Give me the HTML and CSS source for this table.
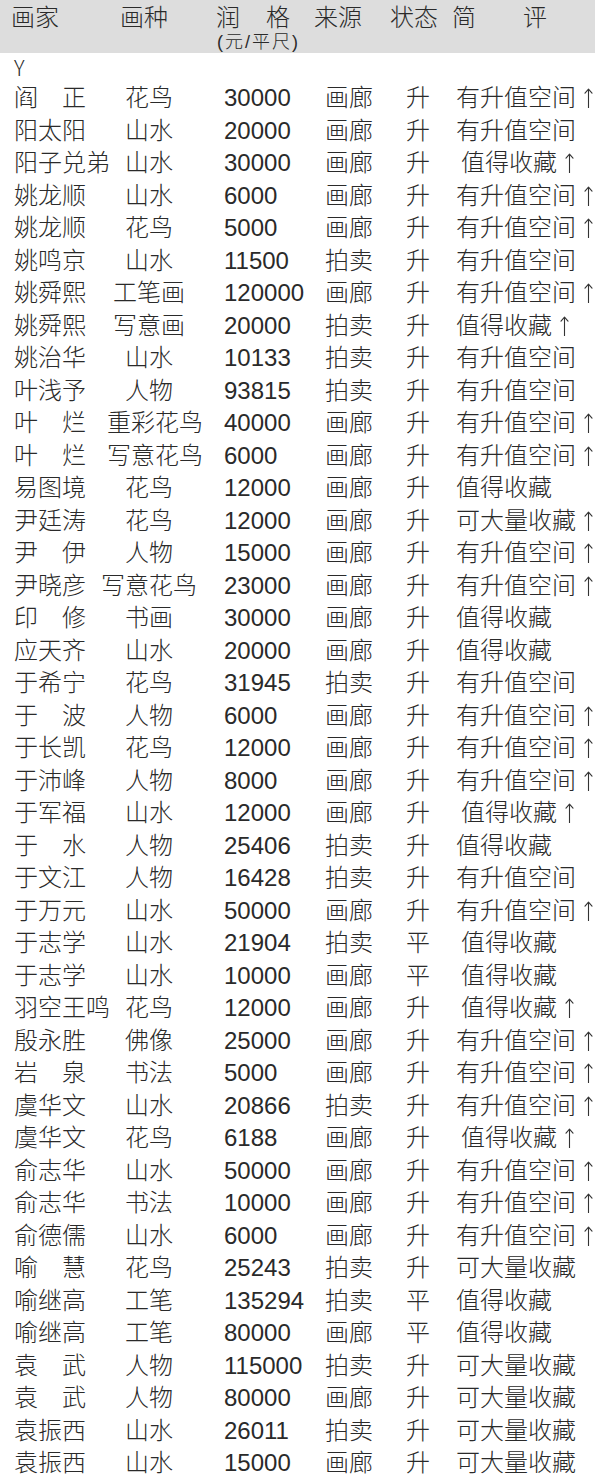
FILE: index.html
```html
<!DOCTYPE html>
<html lang="zh">
<head>
<meta charset="utf-8">
<title>画家润格</title>
<link rel="stylesheet" href="styles.css">
</head>
<body>
<svg width="0" height="0" class="defs" aria-hidden="true">
  <defs>
    <symbol id="arrow-up" viewBox="0 0 9 20">
      <path d="M4.5 1.2 V20 M1 5.2 L4.5 1.2 L8 5.2" fill="none" stroke="#333" stroke-width="1.1" stroke-linecap="round" stroke-linejoin="round"/>
    </symbol>
  </defs>
</svg>
<div class="sheet">
  <div class="head">
    <div class="h-name">画家</div>
    <div class="h-cat">画种</div>
    <div class="h-price">
      <div class="h-price-main"><span>润</span><span>格</span></div>
      <div class="h-unit">(元/平尺)</div>
    </div>
    <div class="h-src">来源</div>
    <div class="h-state">状态</div>
    <div class="h-com"><span>简</span><span class="h-ping">评</span></div>
  </div>
  <div class="letter">Y</div>
  <div class="rows">
    <div class="row"><div class="c-name">阎　正</div><div class="c-cat">花鸟</div><div class="c-price">30000</div><div class="c-src">画廊</div><div class="c-state">升</div><div class="c-com">有升值空间<svg class="up" aria-label="↑"><use href="#arrow-up"/></svg></div></div>
    <div class="row"><div class="c-name">阳太阳</div><div class="c-cat">山水</div><div class="c-price">20000</div><div class="c-src">画廊</div><div class="c-state">升</div><div class="c-com">有升值空间</div></div>
    <div class="row"><div class="c-name">阳子兑弟</div><div class="c-cat">山水</div><div class="c-price">30000</div><div class="c-src">画廊</div><div class="c-state">升</div><div class="c-com shift">值得收藏<svg class="up" aria-label="↑"><use href="#arrow-up"/></svg></div></div>
    <div class="row"><div class="c-name">姚龙顺</div><div class="c-cat">山水</div><div class="c-price">6000</div><div class="c-src">画廊</div><div class="c-state">升</div><div class="c-com">有升值空间<svg class="up" aria-label="↑"><use href="#arrow-up"/></svg></div></div>
    <div class="row"><div class="c-name">姚龙顺</div><div class="c-cat">花鸟</div><div class="c-price">5000</div><div class="c-src">画廊</div><div class="c-state">升</div><div class="c-com">有升值空间<svg class="up" aria-label="↑"><use href="#arrow-up"/></svg></div></div>
    <div class="row"><div class="c-name">姚鸣京</div><div class="c-cat">山水</div><div class="c-price">11500</div><div class="c-src">拍卖</div><div class="c-state">升</div><div class="c-com">有升值空间</div></div>
    <div class="row"><div class="c-name">姚舜熙</div><div class="c-cat">工笔画</div><div class="c-price">120000</div><div class="c-src">画廊</div><div class="c-state">升</div><div class="c-com">有升值空间<svg class="up" aria-label="↑"><use href="#arrow-up"/></svg></div></div>
    <div class="row"><div class="c-name">姚舜熙</div><div class="c-cat">写意画</div><div class="c-price">20000</div><div class="c-src">拍卖</div><div class="c-state">升</div><div class="c-com">值得收藏<svg class="up" aria-label="↑"><use href="#arrow-up"/></svg></div></div>
    <div class="row"><div class="c-name">姚治华</div><div class="c-cat">山水</div><div class="c-price">10133</div><div class="c-src">拍卖</div><div class="c-state">升</div><div class="c-com">有升值空间</div></div>
    <div class="row"><div class="c-name">叶浅予</div><div class="c-cat">人物</div><div class="c-price">93815</div><div class="c-src">拍卖</div><div class="c-state">升</div><div class="c-com">有升值空间</div></div>
    <div class="row"><div class="c-name">叶　烂</div><div class="c-cat wide">重彩花鸟</div><div class="c-price">40000</div><div class="c-src">画廊</div><div class="c-state">升</div><div class="c-com">有升值空间<svg class="up" aria-label="↑"><use href="#arrow-up"/></svg></div></div>
    <div class="row"><div class="c-name">叶　烂</div><div class="c-cat wide">写意花鸟</div><div class="c-price">6000</div><div class="c-src">画廊</div><div class="c-state">升</div><div class="c-com">有升值空间<svg class="up" aria-label="↑"><use href="#arrow-up"/></svg></div></div>
    <div class="row"><div class="c-name">易图境</div><div class="c-cat">花鸟</div><div class="c-price">12000</div><div class="c-src">画廊</div><div class="c-state">升</div><div class="c-com">值得收藏</div></div>
    <div class="row"><div class="c-name">尹廷涛</div><div class="c-cat">花鸟</div><div class="c-price">12000</div><div class="c-src">画廊</div><div class="c-state">升</div><div class="c-com">可大量收藏<svg class="up" aria-label="↑"><use href="#arrow-up"/></svg></div></div>
    <div class="row"><div class="c-name">尹　伊</div><div class="c-cat">人物</div><div class="c-price">15000</div><div class="c-src">画廊</div><div class="c-state">升</div><div class="c-com">有升值空间<svg class="up" aria-label="↑"><use href="#arrow-up"/></svg></div></div>
    <div class="row"><div class="c-name">尹晓彦</div><div class="c-cat">写意花鸟</div><div class="c-price">23000</div><div class="c-src">画廊</div><div class="c-state">升</div><div class="c-com">有升值空间<svg class="up" aria-label="↑"><use href="#arrow-up"/></svg></div></div>
    <div class="row"><div class="c-name">印　修</div><div class="c-cat">书画</div><div class="c-price">30000</div><div class="c-src">画廊</div><div class="c-state">升</div><div class="c-com">值得收藏</div></div>
    <div class="row"><div class="c-name">应天齐</div><div class="c-cat">山水</div><div class="c-price">20000</div><div class="c-src">画廊</div><div class="c-state">升</div><div class="c-com">值得收藏</div></div>
    <div class="row"><div class="c-name">于希宁</div><div class="c-cat">花鸟</div><div class="c-price">31945</div><div class="c-src">拍卖</div><div class="c-state">升</div><div class="c-com">有升值空间</div></div>
    <div class="row"><div class="c-name">于　波</div><div class="c-cat">人物</div><div class="c-price">6000</div><div class="c-src">画廊</div><div class="c-state">升</div><div class="c-com">有升值空间<svg class="up" aria-label="↑"><use href="#arrow-up"/></svg></div></div>
    <div class="row"><div class="c-name">于长凯</div><div class="c-cat">花鸟</div><div class="c-price">12000</div><div class="c-src">画廊</div><div class="c-state">升</div><div class="c-com">有升值空间<svg class="up" aria-label="↑"><use href="#arrow-up"/></svg></div></div>
    <div class="row"><div class="c-name">于沛峰</div><div class="c-cat">人物</div><div class="c-price">8000</div><div class="c-src">画廊</div><div class="c-state">升</div><div class="c-com">有升值空间<svg class="up" aria-label="↑"><use href="#arrow-up"/></svg></div></div>
    <div class="row"><div class="c-name">于军福</div><div class="c-cat">山水</div><div class="c-price">12000</div><div class="c-src">画廊</div><div class="c-state">升</div><div class="c-com shift">值得收藏<svg class="up" aria-label="↑"><use href="#arrow-up"/></svg></div></div>
    <div class="row"><div class="c-name">于　水</div><div class="c-cat">人物</div><div class="c-price">25406</div><div class="c-src">拍卖</div><div class="c-state">升</div><div class="c-com">值得收藏</div></div>
    <div class="row"><div class="c-name">于文江</div><div class="c-cat">人物</div><div class="c-price">16428</div><div class="c-src">拍卖</div><div class="c-state">升</div><div class="c-com">有升值空间</div></div>
    <div class="row"><div class="c-name">于万元</div><div class="c-cat">山水</div><div class="c-price">50000</div><div class="c-src">画廊</div><div class="c-state">升</div><div class="c-com">有升值空间<svg class="up" aria-label="↑"><use href="#arrow-up"/></svg></div></div>
    <div class="row"><div class="c-name">于志学</div><div class="c-cat">山水</div><div class="c-price">21904</div><div class="c-src">拍卖</div><div class="c-state">平</div><div class="c-com shift">值得收藏</div></div>
    <div class="row"><div class="c-name">于志学</div><div class="c-cat">山水</div><div class="c-price">10000</div><div class="c-src">画廊</div><div class="c-state">平</div><div class="c-com shift">值得收藏</div></div>
    <div class="row"><div class="c-name">羽空王鸣</div><div class="c-cat">花鸟</div><div class="c-price">12000</div><div class="c-src">画廊</div><div class="c-state">升</div><div class="c-com shift">值得收藏<svg class="up" aria-label="↑"><use href="#arrow-up"/></svg></div></div>
    <div class="row"><div class="c-name">殷永胜</div><div class="c-cat">佛像</div><div class="c-price">25000</div><div class="c-src">画廊</div><div class="c-state">升</div><div class="c-com">有升值空间<svg class="up" aria-label="↑"><use href="#arrow-up"/></svg></div></div>
    <div class="row"><div class="c-name">岩　泉</div><div class="c-cat">书法</div><div class="c-price">5000</div><div class="c-src">画廊</div><div class="c-state">升</div><div class="c-com">有升值空间<svg class="up" aria-label="↑"><use href="#arrow-up"/></svg></div></div>
    <div class="row"><div class="c-name">虞华文</div><div class="c-cat">山水</div><div class="c-price">20866</div><div class="c-src">拍卖</div><div class="c-state">升</div><div class="c-com">有升值空间<svg class="up" aria-label="↑"><use href="#arrow-up"/></svg></div></div>
    <div class="row"><div class="c-name">虞华文</div><div class="c-cat">花鸟</div><div class="c-price">6188</div><div class="c-src">画廊</div><div class="c-state">升</div><div class="c-com shift">值得收藏<svg class="up" aria-label="↑"><use href="#arrow-up"/></svg></div></div>
    <div class="row"><div class="c-name">俞志华</div><div class="c-cat">山水</div><div class="c-price">50000</div><div class="c-src">画廊</div><div class="c-state">升</div><div class="c-com">有升值空间<svg class="up" aria-label="↑"><use href="#arrow-up"/></svg></div></div>
    <div class="row"><div class="c-name">俞志华</div><div class="c-cat">书法</div><div class="c-price">10000</div><div class="c-src">画廊</div><div class="c-state">升</div><div class="c-com">有升值空间<svg class="up" aria-label="↑"><use href="#arrow-up"/></svg></div></div>
    <div class="row"><div class="c-name">俞德儒</div><div class="c-cat">山水</div><div class="c-price">6000</div><div class="c-src">画廊</div><div class="c-state">升</div><div class="c-com">有升值空间<svg class="up" aria-label="↑"><use href="#arrow-up"/></svg></div></div>
    <div class="row"><div class="c-name">喻　慧</div><div class="c-cat">花鸟</div><div class="c-price">25243</div><div class="c-src">拍卖</div><div class="c-state">升</div><div class="c-com">可大量收藏</div></div>
    <div class="row"><div class="c-name">喻继高</div><div class="c-cat">工笔</div><div class="c-price">135294</div><div class="c-src">拍卖</div><div class="c-state">平</div><div class="c-com">值得收藏</div></div>
    <div class="row"><div class="c-name">喻继高</div><div class="c-cat">工笔</div><div class="c-price">80000</div><div class="c-src">画廊</div><div class="c-state">平</div><div class="c-com">值得收藏</div></div>
    <div class="row"><div class="c-name">袁　武</div><div class="c-cat">人物</div><div class="c-price">115000</div><div class="c-src">拍卖</div><div class="c-state">升</div><div class="c-com">可大量收藏</div></div>
    <div class="row"><div class="c-name">袁　武</div><div class="c-cat">人物</div><div class="c-price">80000</div><div class="c-src">画廊</div><div class="c-state">升</div><div class="c-com">可大量收藏</div></div>
    <div class="row"><div class="c-name">袁振西</div><div class="c-cat">山水</div><div class="c-price">26011</div><div class="c-src">拍卖</div><div class="c-state">升</div><div class="c-com">可大量收藏</div></div>
    <div class="row"><div class="c-name">袁振西</div><div class="c-cat">山水</div><div class="c-price">15000</div><div class="c-src">画廊</div><div class="c-state">升</div><div class="c-com">可大量收藏</div></div>
  </div>
</div>
</body>
</html>
```
FILE: styles.css
```css
html, body {
  margin: 0;
  padding: 0;
  background: #ffffff;
}

body {
  font-family: "Liberation Sans", "Noto Sans CJK SC", sans-serif;
  font-weight: 300;
  color: #2a2a2a;
  font-size: 24px;
  line-height: 32.5px;
  width: 600px;
  overflow: hidden;
}

.defs {
  position: absolute;
  width: 0;
  height: 0;
}

.sheet {
  width: 600px;
}

/* header band */
.head {
  width: 595px;
  height: 53px;
  background: #dddddd;
  box-sizing: border-box;
  padding-top: 2px;
  display: grid;
  grid-template-columns: 11px 109px 96px 98px 76px 62px 1fr;
  grid-template-areas: ". name cat price src state com";
  white-space: nowrap;
}

.h-name { grid-area: name; }
.h-cat { grid-area: cat; }
.h-price { grid-area: price; }
.h-src { grid-area: src; }
.h-state { grid-area: state; }
.h-com { grid-area: com; }

.h-price-main {
  display: flex;
  gap: 26px;
}

.h-unit {
  font-size: 18px;
  line-height: 20px;
  letter-spacing: 2px;
  margin-top: -3px;
  margin-left: 1px;
}

.h-ping {
  margin-left: 47px;
}

/* letter index */
.letter {
  height: 29px;
  font-family: "Noto Sans CJK SC", sans-serif;
  font-weight: 300;
  font-size: 21px;
  line-height: 28px;
  padding-left: 14px;
  overflow: hidden;
}

/* data rows */
.rows {
  display: flex;
  flex-direction: column;
}

.row {
  height: 32.5px;
  display: grid;
  grid-template-columns: 86px 98px 127px 81px 50px 1fr;
  padding-left: 14px;
  white-space: nowrap;
}

.c-cat {
  text-align: center;
}

.c-cat.wide {
  padding-left: 7px;
}

.c-price {
  padding-left: 26px;
}

.c-com.shift {
  padding-left: 5px;
}

.up {
  width: 9px;
  height: 20px;
  margin-left: 8px;
  vertical-align: -2px;
}
```
